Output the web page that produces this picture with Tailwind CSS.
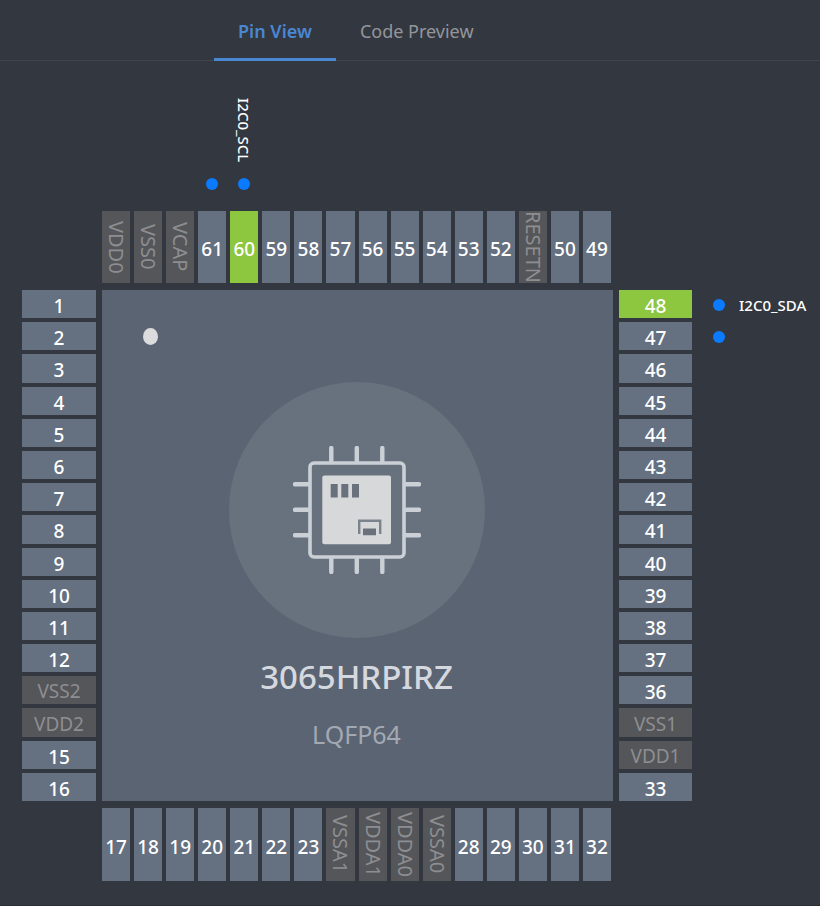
<!DOCTYPE html>
<html lang="en">
<head>
<meta charset="utf-8">
<meta name="viewport" content="width=device-width, initial-scale=1">
<title>Pin View</title>
<script src="https://cdn.jsdelivr.net/npm/@tailwindcss/browser@4"></script>
</head>
<body class="min-h-screen border-b border-[#2b2d35] bg-[#33373f] font-['Noto_Sans','Open_Sans',sans-serif] text-white">
<header class="border-b border-[#41444b]">
  <nav class="-mb-px flex pl-[214px]" aria-label="Views">
    <a href="#pins" aria-current="page" class="border-b-3 border-[#4a87d3] px-6 pt-[17px] pb-[13px] text-lg font-semibold text-[#4a87d3]">Pin View</a>
    <a href="#code" class="px-6 pt-[17px] pb-[13px] text-lg text-[#94969b]">Code Preview</a>
  </nav>
</header>

<main id="pins" class="grid grid-cols-[74px_minmax(0,511px)_73px_minmax(0,1fr)] grid-rows-[143px_72px_auto_73px] gap-x-[6px] gap-y-[7px] pb-6 pl-[22px]">
  <div class="col-start-2 row-start-1 grid grid-cols-16 items-end gap-1 pr-[2px] pb-[14px]">
    <div class="col-start-4 flex justify-center"><span class="size-3 rounded-full bg-[#0a7aff]"></span></div>
    <div class="col-start-5 flex flex-col items-center gap-4">
      <span class="text-[15px] leading-5 font-medium [writing-mode:vertical-rl]">I2C0_SCL</span>
      <span class="size-3 rounded-full bg-[#0a7aff]"></span>
    </div>
  </div>

  <div id="top" class="col-start-2 row-start-2 grid grid-cols-16 gap-1 pr-[2px]"></div>
  <div id="left" class="col-start-1 row-start-3 grid grid-rows-16 gap-1"></div>

  <section class="relative col-start-2 row-start-3 flex aspect-square flex-col items-center bg-[#5b6472] pt-[92px] pr-[2px]">
    <span class="absolute top-[38px] left-[41px] h-[17px] w-[15px] rounded-[50%] bg-[#dcdcde]"></span>
    <div class="flex size-64 items-center justify-center rounded-full bg-[#68727e]">
      <svg class="size-32" viewBox="0 0 128 128" fill="none" aria-hidden="true">
        <g stroke="#cbd0d6" stroke-width="4.4" stroke-linecap="round">
          <path d="M38.3 2V15M63.8 2V15M89.3 2V15M38.3 113V126M63.8 113V126M89.3 113V126M2 38.3H15M2 63.8H15M2 89.3H15M113 38.3H126M113 63.8H126M113 89.3H126"/>
        </g>
        <rect x="17" y="17" width="94" height="94" rx="4" stroke="#cbd0d6" stroke-width="3.6"/>
        <rect x="29.3" y="29.6" width="68.7" height="68.7" rx="2" fill="#d7d8da"/>
        <path fill="#68717c" d="M37.7 38h7v13.4h-7zM48.3 38h7v13.4h-7zM59 38h7v13.4h-7zM70 82.6h13v6.6H70z"/>
        <path d="M66.2 88V74.8H87.2V88" stroke="#7b838d" stroke-width="2.4"/>
      </svg>
    </div>
    <h1 class="mt-[18px] text-[33px] leading-[42px] font-medium text-[#d5d9df]">3065HRPIRZ</h1>
    <p class="mt-[18px] text-[25px] leading-9 text-[#a3a9b3]">LQFP64</p>
  </section>

  <div id="right" class="col-start-3 row-start-3 grid grid-rows-16 gap-1"></div>
  <div class="col-start-4 row-start-3 grid grid-rows-16 gap-1 pl-[15px]">
    <div class="flex items-center gap-[14px] pt-[2px]">
      <span class="size-3 shrink-0 rounded-full bg-[#0a7aff]"></span>
      <span class="text-[15px] leading-5 font-medium">I2C0_SDA</span>
    </div>
    <div class="flex items-center pt-[2px]"><span class="size-3 rounded-full bg-[#0a7aff]"></span></div>
  </div>
  <div id="bottom" class="col-start-2 row-start-4 grid grid-cols-16 gap-1 pr-[2px]"></div>
</main>

<script>
  const sides = {
    top: ['VDD0', 'VSS0', 'VCAP', 61, 60, 59, 58, 57, 56, 55, 54, 53, 52, 'RESETN', 50, 49],
    left: [1, 2, 3, 4, 5, 6, 7, 8, 9, 10, 11, 12, 'VSS2', 'VDD2', 15, 16],
    right: [48, 47, 46, 45, 44, 43, 42, 41, 40, 39, 38, 37, 36, 'VSS1', 'VDD1', 33],
    bottom: [17, 18, 19, 20, 21, 22, 23, 'VSSA1', 'VDDA1', 'VDDA0', 'VSSA0', 28, 29, 30, 31, 32]
  };
  const assigned = [60, 48];
  const base = 'flex min-h-0 min-w-0 items-center justify-center overflow-hidden leading-6 ';
  for (const [side, pins] of Object.entries(sides)) {
    const vertical = side === 'top' || side === 'bottom';
    for (const pin of pins) {
      const button = document.createElement('button');
      const label = document.createElement('span');
      const reserved = typeof pin === 'string';
      button.type = 'button';
      button.disabled = reserved;
      button.className = base + (reserved
        ? 'bg-[#555659] text-[19px] text-[#8d8e91]'
        : assigned.includes(pin)
          ? 'bg-[#8dc63f] pt-[4px] text-[19px] font-medium text-white'
          : 'bg-[#657080] pt-[4px] text-[19px] font-medium text-white');
      if (reserved && !vertical) label.className = 'pt-[2px]';
      if (reserved && vertical) label.className = 'text-[20px] leading-6 [writing-mode:vertical-rl]';
      label.textContent = pin;
      button.append(label);
      document.getElementById(side).append(button);
    }
  }
</script>
</body>
</html>
